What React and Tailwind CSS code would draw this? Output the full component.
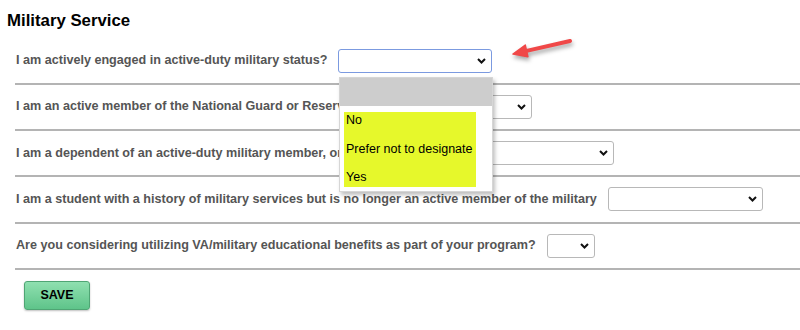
import { useState } from 'react';

const questions = [
  { label: 'I am actively engaged in active-duty military status?', width: 'w-[154px]', focused: true },
  { label: 'I am an active member of the National Guard or Reserves?', width: 'w-[155px]' },
  { label: 'I am a dependent of an active-duty military member, or veteran?', width: 'w-[205px]' },
  { label: 'I am a student with a history of military services but is no longer an active member of the military', width: 'w-[155px]' },
  { label: 'Are you considering utilizing VA/military educational benefits as part of your program?', width: 'w-[48px]' }
];

function Chevron() {
  return (
    <svg width="9" height="6" viewBox="0 0 9 6" className="mr-[5px]">
      <path d="M1 1l3.5 3.5L8 1" fill="none" stroke="#111" strokeWidth="2" />
    </svg>
  );
}

function FakeSelect({ width, focused }) {
  return (
    <div
      className={`ml-[11px] flex h-[24px] shrink-0 items-center justify-end rounded-[3px] border bg-white ${width} ${
        focused ? 'border-[#7b9ae0]' : 'border-[#b8b8b8]'
      }`}
    >
      <Chevron />
    </div>
  );
}

export default function App() {
  const [open] = useState(true);

  return (
    <div className="relative h-[330px] w-[800px] overflow-hidden bg-white font-['Liberation_Sans',Arial,sans-serif]">
      <h2 className="pl-[7px] pt-[11px] text-[16.8px] font-bold leading-5 text-black">Military Service</h2>

      <div className="ml-[15px] mt-[7.5px]">
        {questions.map((q) => (
          <div key={q.label} className="flex h-[46.25px] items-center border-b-2 border-[#b4b4b4] pl-[1px]">
            <span className="whitespace-nowrap text-[12.6px] font-bold text-[#555]">{q.label}</span>
            <FakeSelect width={q.width} focused={q.focused} />
          </div>
        ))}

        <button
          type="button"
          className="ml-[9px] mt-[11px] h-[29px] w-[66px] rounded-[3px] border border-[#4fa574] bg-gradient-to-b from-[#8fe0b0] to-[#5ec48a] text-[12.5px] font-bold text-black shadow-[0_1px_2px_rgba(0,0,0,0.25)]"
        >
          SAVE
        </button>
      </div>

      {open ? (
        <div className="absolute left-[339px] top-[77px] h-[115px] w-[154px] border border-[#d6d6d6] bg-white shadow-[2px_3px_4px_rgba(0,0,0,0.25)]">
          <div className="h-[28px] bg-[#cdcdcd]" />
          <div className="absolute left-[4px] top-[34px] flex h-[75px] w-[132px] flex-col gap-[12.5px] bg-[#e6f82b] pl-[2px] text-[12.5px] leading-4 text-black">
            <span>No</span>
            <span>Prefer not to designate</span>
            <span>Yes</span>
          </div>
        </div>
      ) : null}

      <svg
        width="75"
        height="35"
        viewBox="0 0 75 35"
        className="absolute left-[505px] top-[30px] drop-shadow-[1px_3px_2px_rgba(0,0,0,0.35)]"
      >
        <path d="M21.6 20.9L65 11" stroke="#f04848" strokeWidth="4" strokeLinecap="round" />
        <path d="M8 24L22.9 26.7L20.3 15.1Z" fill="#f04848" stroke="#f04848" strokeWidth="1.5" strokeLinejoin="round" />
      </svg>
    </div>
  );
}
